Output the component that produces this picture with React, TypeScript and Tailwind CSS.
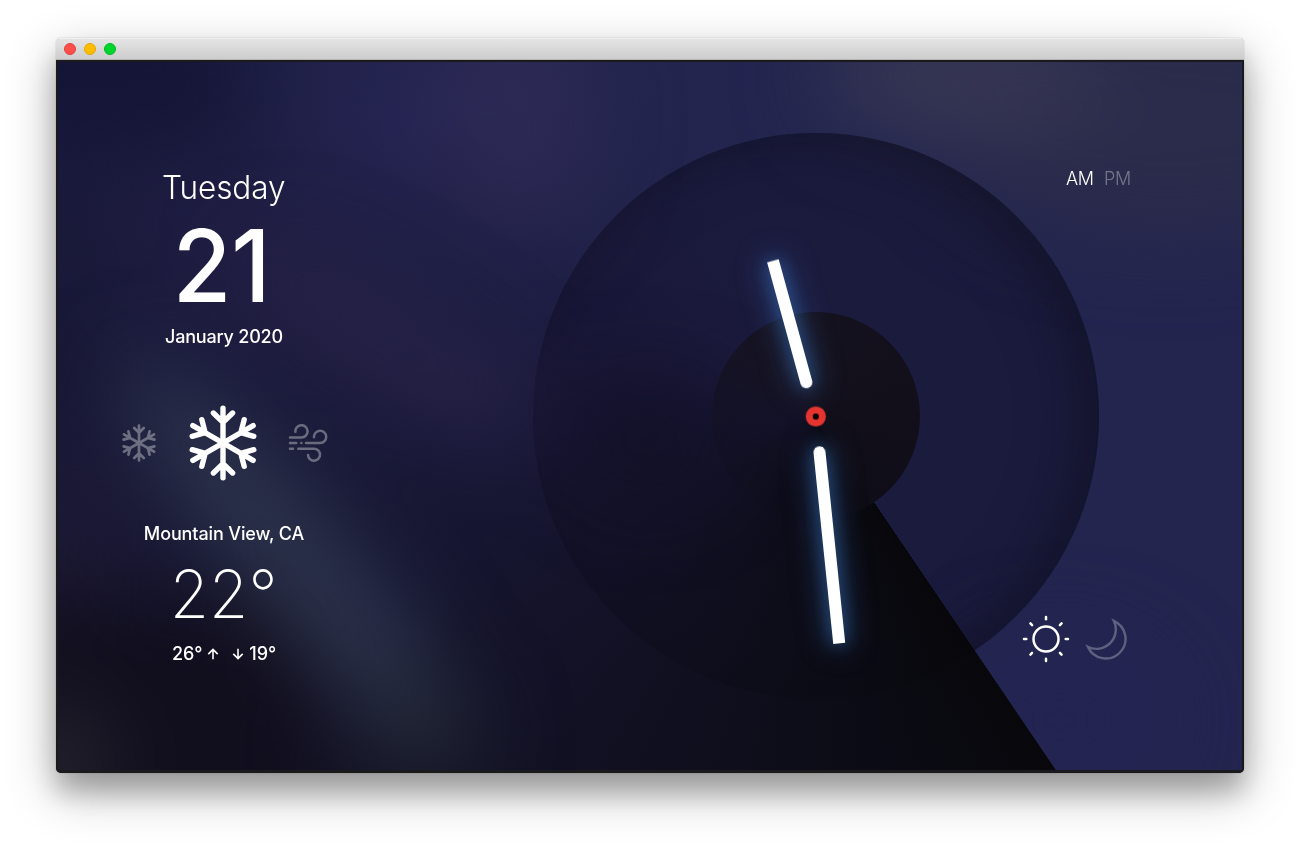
import React from "react";

function Snowflake({ className }: { className: string }) {
  return (
    <svg viewBox="-40 -40 80 80" className={className} fill="none" stroke="currentColor" strokeWidth="5.4" strokeLinecap="round" strokeLinejoin="round">
      {[0, 60, 120, 180, 240, 300].map((a) => (
        <path key={a} d="M0 0V-34.8M-9.6 -30L0 -20.6L9.6 -30" transform={`rotate(${a})`} />
      ))}
    </svg>
  );
}

function Wind({ className }: { className: string }) {
  return (
    <svg viewBox="0 0 41 38" className={className} fill="none" stroke="currentColor" strokeWidth="2.5" strokeLinecap="round">
      <path d="M2 13.4H13.5A6.1 6.1 0 1 0 7.4 7.8" />
      <path d="M2 19H8.2M13.3 19H13.4M18 19H32.2A6.1 6.1 0 1 0 26 13.2" />
      <path d="M2 24.7H5M10.3 24.7H26A6 6 0 1 1 20 30.9" />
    </svg>
  );
}

function Sun({ className }: { className: string }) {
  return (
    <svg viewBox="-24 -24 48 48" className={className} fill="none" stroke="currentColor" strokeWidth="2.5" strokeLinecap="round">
      <circle r="12.5" />
      {[0, 45, 90, 135, 180, 225, 270, 315].map((a) => (
        <path key={a} d="M0 -19.7V-22" transform={`rotate(${a})`} />
      ))}
    </svg>
  );
}

function Moon({ className }: { className: string }) {
  return (
    <svg viewBox="85 19 43 43" className={className} fill="none" stroke="currentColor" strokeWidth="2.4" strokeLinejoin="miter">
      <path d="M113.8 21.8A19.7 19.7 0 1 1 87.8 47.8A19.4 19.4 0 0 0 113.8 21.8Z" />
    </svg>
  );
}

function Arrow({ down }: { down?: boolean }) {
  return (
    <svg viewBox="0 0 12 12" className={down ? "size-3 rotate-180" : "size-3"} fill="none" stroke="currentColor" strokeWidth="1.6">
      <path d="M6 11.3V1.6M1.3 6.1L6 1.4L10.7 6.1" />
    </svg>
  );
}

function Backdrop() {
  return (
    <svg className="absolute inset-0 size-full" viewBox="58 62 1184 708" preserveAspectRatio="none">
      <defs>
        <filter id="soft" x="-100%" y="-100%" width="300%" height="300%" colorInterpolationFilters="sRGB">
          <feGaussianBlur stdDeviation="42" />
        </filter>
      </defs>
      <rect x="58" y="62" width="1184" height="708" fill="#23254f" />
      <g filter="url(#soft)">
        <rect x="-60" y="-60" width="300" height="210" fill="#15173b" />
        <rect x="-60" y="170" width="180" height="260" fill="#1d1f42" />
        <ellipse cx="250" cy="260" rx="110" ry="60" fill="#26254f" />
        <ellipse cx="390" cy="130" rx="80" ry="80" fill="#29295c" />
        <ellipse cx="510" cy="120" rx="80" ry="120" fill="#302d5b" />
        <ellipse cx="1170" cy="120" rx="230" ry="120" fill="#2b2b4b" />
        <ellipse cx="960" cy="75" rx="140" ry="65" fill="#363653" />
        <ellipse cx="1060" cy="720" rx="110" ry="80" fill="#242452" />
      </g>
    </svg>
  );
}

function Haze() {
  return (
    <svg className="absolute inset-0 size-full" viewBox="58 62 1184 708" preserveAspectRatio="none">
      <g filter="url(#soft)">
        <rect x="-80" y="600" width="400" height="300" fill="#110e1d" />
        <rect x="-60" y="480" width="190" height="120" fill="#1c1934" />
        <ellipse cx="390" cy="340" rx="170" ry="45" fill="#282349" opacity=".85" transform="rotate(32 390 340)" />
        <ellipse cx="295" cy="560" rx="260" ry="52" fill="#2d344d" transform="rotate(50 295 560)" />
        <ellipse cx="420" cy="735" rx="65" ry="50" fill="#21252f" opacity=".8" />
        <ellipse cx="55" cy="765" rx="50" ry="60" fill="#292633" />
        <ellipse cx="650" cy="440" rx="75" ry="60" fill="#111025" opacity=".75" />
      </g>
    </svg>
  );
}

function Dial() {
  return (
    <div className="absolute left-[475px] top-[71px] size-[566px] rounded-full bg-[#12112b]/48 shadow-[inset_-14px_0_60px_rgba(8,10,18,0.5)]" />
  );
}

function Hub() {
  return (
    <div className="absolute left-[654px] top-[250px] size-[208px] rounded-full bg-[conic-gradient(#15121f_0deg,#120f1b_90deg,#0f0d17_145.9deg,rgba(13,11,21,0.6)_160deg,rgba(14,13,24,0.3)_200deg,rgba(18,16,33,0.5)_255deg,#141225_290deg,#161322_330deg,#15121f_360deg)]" />
  );
}

function Hands() {
  return (
    <svg className="absolute inset-0 size-full" viewBox="58 62 1184 708">
      <g transform="translate(815.8 416.5)">
        <g className="[filter:drop-shadow(0_0_8px_rgba(56,115,190,0.5))_drop-shadow(0_0_14px_rgba(56,115,190,0.65))]" fill="#fff">
          <path d="M-6 -161.5V-35.5A6 6 0 0 0 6 -35.5V-161.5Z" transform="rotate(-15.4)" />
          <path d="M-6 -228V-36A6 6 0 0 0 6 -36V-228Z" transform="rotate(174.1)" />
        </g>
        <circle r="6.6" fill="#000" stroke="#e63530" strokeWidth="7" />
      </g>
    </svg>
  );
}

export default function App() {
  return (
    <div className="flex h-[847px] w-[1300px] overflow-hidden bg-white pl-14 pt-[38px] font-['Inter',sans-serif] text-white">
      <div className="flex h-[735px] w-[1188px] flex-col overflow-hidden rounded-[5px] shadow-[0_0_1px_rgba(0,0,0,0.5),0_19px_25px_rgba(0,0,0,0.2),0_18px_50px_rgba(0,0,0,0.3)]">
        <header className="flex h-[22px] shrink-0 items-center gap-2 border-t border-b border-t-[#f0f0f0] border-b-[#b5b5b5] bg-linear-to-b from-[#e4e4e4] to-[#cdcdcd] px-2">
          <span className="size-3 rounded-full border border-[#e33e3a] bg-[#ff4f49]" />
          <span className="size-3 rounded-full border border-[#e6a500] bg-[#ffbd00]" />
          <span className="size-3 rounded-full border border-[#00b922] bg-[#00d52e]" />
        </header>
        <main className="flex min-h-0 flex-1 border-2 border-[#1a1a1c] bg-[#1a1a1c]">
          <div className="relative flex flex-1 overflow-hidden">
            <div className="absolute inset-x-0 top-0 h-[708px] bg-[#23254f]">
              <Backdrop />
              <Dial />
              <div className="absolute inset-0 bg-[conic-gradient(from_145.9deg_at_758px_354.5px,rgba(7,7,10,0.97)_0deg,rgba(10,10,18,0.93)_28deg,rgba(13,12,24,0.86)_60deg,rgba(15,14,31,0.76)_90deg,rgba(17,15,38,0.58)_118deg,rgba(20,16,44,0.38)_140deg,rgba(22,18,46,0.16)_165deg,rgba(22,20,48,0)_195deg,rgba(22,20,48,0)_359.9deg,rgba(7,7,10,0.97)_360deg)]" />
              <Haze />
              <Hub />
              <Hands />
            </div>
            <section className="relative ml-[46px] flex w-[240px] flex-col items-center whitespace-nowrap">
              <div className="mt-[105px] h-10 scale-x-[0.955] text-[33px] leading-10 font-light tracking-[-0.1px]">Tuesday</div>
              <div className="mt-[9px] h-[100px] scale-x-[0.95] pr-[4px] text-[100px] leading-[100px] font-medium">21</div>
              <div className="mt-[9px] h-6 text-[18px] leading-6 font-medium tracking-[-0.2px]">January 2020</div>
              <div className="mt-[53.5px] flex h-20 w-full items-center justify-center">
                <Snowflake className="mr-[24.5px] size-10 shrink-0 opacity-35" />
                <Snowflake className="size-20 shrink-0" />
                <Wind className="ml-[25px] h-[38px] w-[41px] shrink-0 opacity-35" />
              </div>
              <div className="mt-[39.5px] h-6 text-[18px] leading-6 font-medium tracking-[-0.12px]">Mountain View, CA</div>
              <div className="mt-[14px] h-[68px] scale-x-[0.95] text-[67px] leading-[68px] font-extralight">22°</div>
              <div className="mt-[14px] flex h-6 items-center text-[18px] leading-6 font-medium tracking-[-0.1px]">
                <span>26°</span>
                <span className="ml-[5px]"><Arrow /></span>
                <span className="ml-[13px]"><Arrow down /></span>
                <span className="ml-[5px]">19°</span>
              </div>
            </section>
            <aside className="relative mr-[111px] ml-auto flex flex-col items-end justify-between pt-[105px] pb-[108px]">
              <div className="flex gap-[10px] text-[18px] leading-6 font-light tracking-[-0.2px]">
                <span>AM</span>
                <span className="text-white/35">PM</span>
              </div>
              <div className="flex items-center gap-[15px] pr-[3px]">
                <Sun className="size-12" />
                <Moon className="relative top-[0.5px] size-[43px] opacity-28" />
              </div>
            </aside>
          </div>
        </main>
      </div>
    </div>
  );
}
